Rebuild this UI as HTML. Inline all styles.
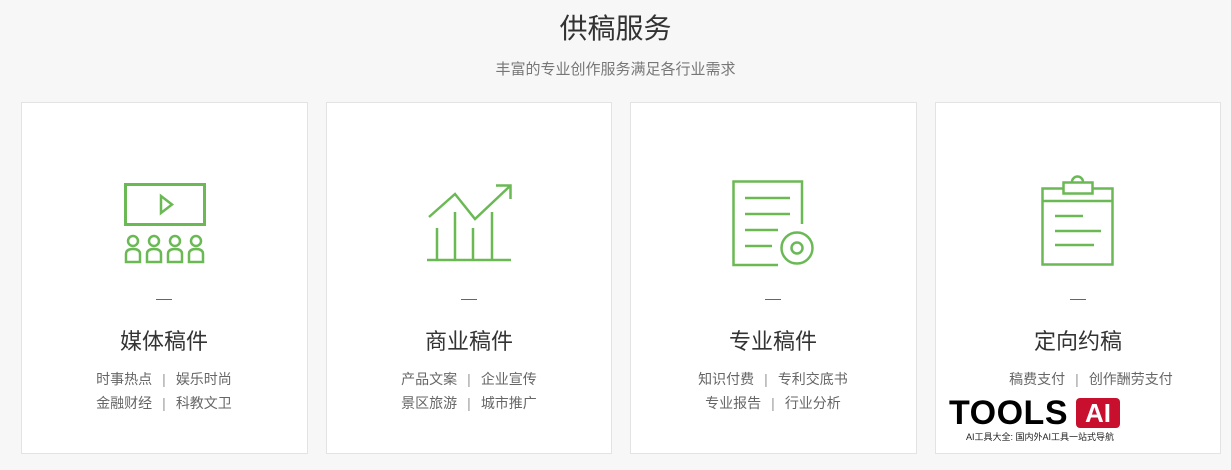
<!DOCTYPE html>
<html><head><meta charset="utf-8"><style>
body{margin:0;width:1231px;height:470px;background:#f7f7f7;font-family:"Liberation Sans","Noto Sans CJK SC",sans-serif;position:relative;overflow:hidden}
.t{position:absolute;left:0;width:1231px;text-align:center}
.card{position:absolute;top:102px;height:352px;background:#fff;border:1px solid #e3e3e3;box-sizing:border-box}
.dash{position:absolute;top:299px;width:16px;height:1px;background:#666}
.h{position:absolute;top:324px;width:286px;text-align:center;font-size:22px;color:#333}
.s{position:absolute;width:286px;text-align:center;font-size:14px;color:#666}
.s i{font-style:normal;color:#999;margin:0 10px}
svg{position:absolute;left:0;top:0}
</style></head><body>
<div class="t" style="top:7px;font-size:28px;color:#333">供稿服务</div>
<div class="t" style="top:58px;font-size:15px;color:#777">丰富的专业创作服务满足各行业需求</div>
<div class="card" style="left:21px;width:287px"></div>
<div class="card" style="left:326px;width:286px"></div>
<div class="card" style="left:630px;width:287px"></div>
<div class="card" style="left:935px;width:286px"></div>
<svg width="1231" height="470" fill="none" stroke="#6ab955" stroke-width="3">
<rect x="125.5" y="184.5" width="79" height="40"/>
<path d="M161 196v17l11-8.5z" stroke-width="2.5"/>
<g stroke-width="2.5">
<circle cx="133" cy="241" r="5"/><circle cx="154" cy="241" r="5"/><circle cx="175" cy="241" r="5"/><circle cx="196" cy="241" r="5"/>
<path d="M126 262v-8q0-5 7-5t7 5v8zM147 262v-8q0-5 7-5t7 5v8zM168 262v-8q0-5 7-5t7 5v8zM189 262v-8q0-5 7-5t7 5v8z"/>
</g>
<path d="M429 217L455 194L475 219L510 186M496 185.5H510.5V199" stroke-width="2.5"/>
<path d="M437 228V259M455 212V259M473 228V259M492 212V259M427 260H511" stroke-width="2.5"/>
<path d="M802 224V181.5H733.5V265H778" stroke-width="2.5"/>
<path d="M745 198H790M745 214H790M745 230H778M745 246H772" stroke-width="2.5"/>
<circle cx="797" cy="248" r="15.5" stroke-width="2.5"/><circle cx="797" cy="248" r="5.5" stroke-width="2.5"/>
<rect x="1042.5" y="188.5" width="70" height="76" stroke-width="2.5"/>
<path d="M1043 201H1112M1055 216H1083M1055 231H1101M1055 245H1094" stroke-width="2.5"/>
<rect x="1063.5" y="182.5" width="29" height="11" fill="#fff" stroke-width="2.5"/>
<path d="M1072 182a5.5 5.5 0 0 1 11 0" stroke-width="2.5"/>
</svg>
<div class="dash" style="left:156px"></div><div class="dash" style="left:461px"></div><div class="dash" style="left:765px"></div><div class="dash" style="left:1070px"></div>
<div class="h" style="left:21px">媒体稿件</div>
<div class="h" style="left:326px">商业稿件</div>
<div class="h" style="left:630px">专业稿件</div>
<div class="h" style="left:935px">定向约稿</div>
<div class="s" style="left:21px;top:369px">时事热点<i>|</i>娱乐时尚</div>
<div class="s" style="left:21px;top:393px">金融财经<i>|</i>科教文卫</div>
<div class="s" style="left:326px;top:369px">产品文案<i>|</i>企业宣传</div>
<div class="s" style="left:326px;top:393px">景区旅游<i>|</i>城市推广</div>
<div class="s" style="left:630px;top:369px">知识付费<i>|</i>专利交底书</div>
<div class="s" style="left:630px;top:393px">专业报告<i>|</i>行业分析</div>
<div class="s" style="left:948px;top:369px">稿费支付<i>|</i>创作酬劳支付</div>
<div style="position:absolute;left:949px;top:395px;font-size:34px;font-weight:bold;color:#000;letter-spacing:0.5px;line-height:36px">TOOLS</div>
<div style="position:absolute;left:1076px;top:398px;width:44px;height:30px;background:#c8102e;border-radius:4px;color:#fff;font-weight:bold;font-size:26px;line-height:30px;text-align:center">AI</div>
<div style="position:absolute;left:966px;top:430px;font-size:9px;color:#222;white-space:nowrap">AI工具大全: 国内外AI工具一站式导航</div>
</body></html>
